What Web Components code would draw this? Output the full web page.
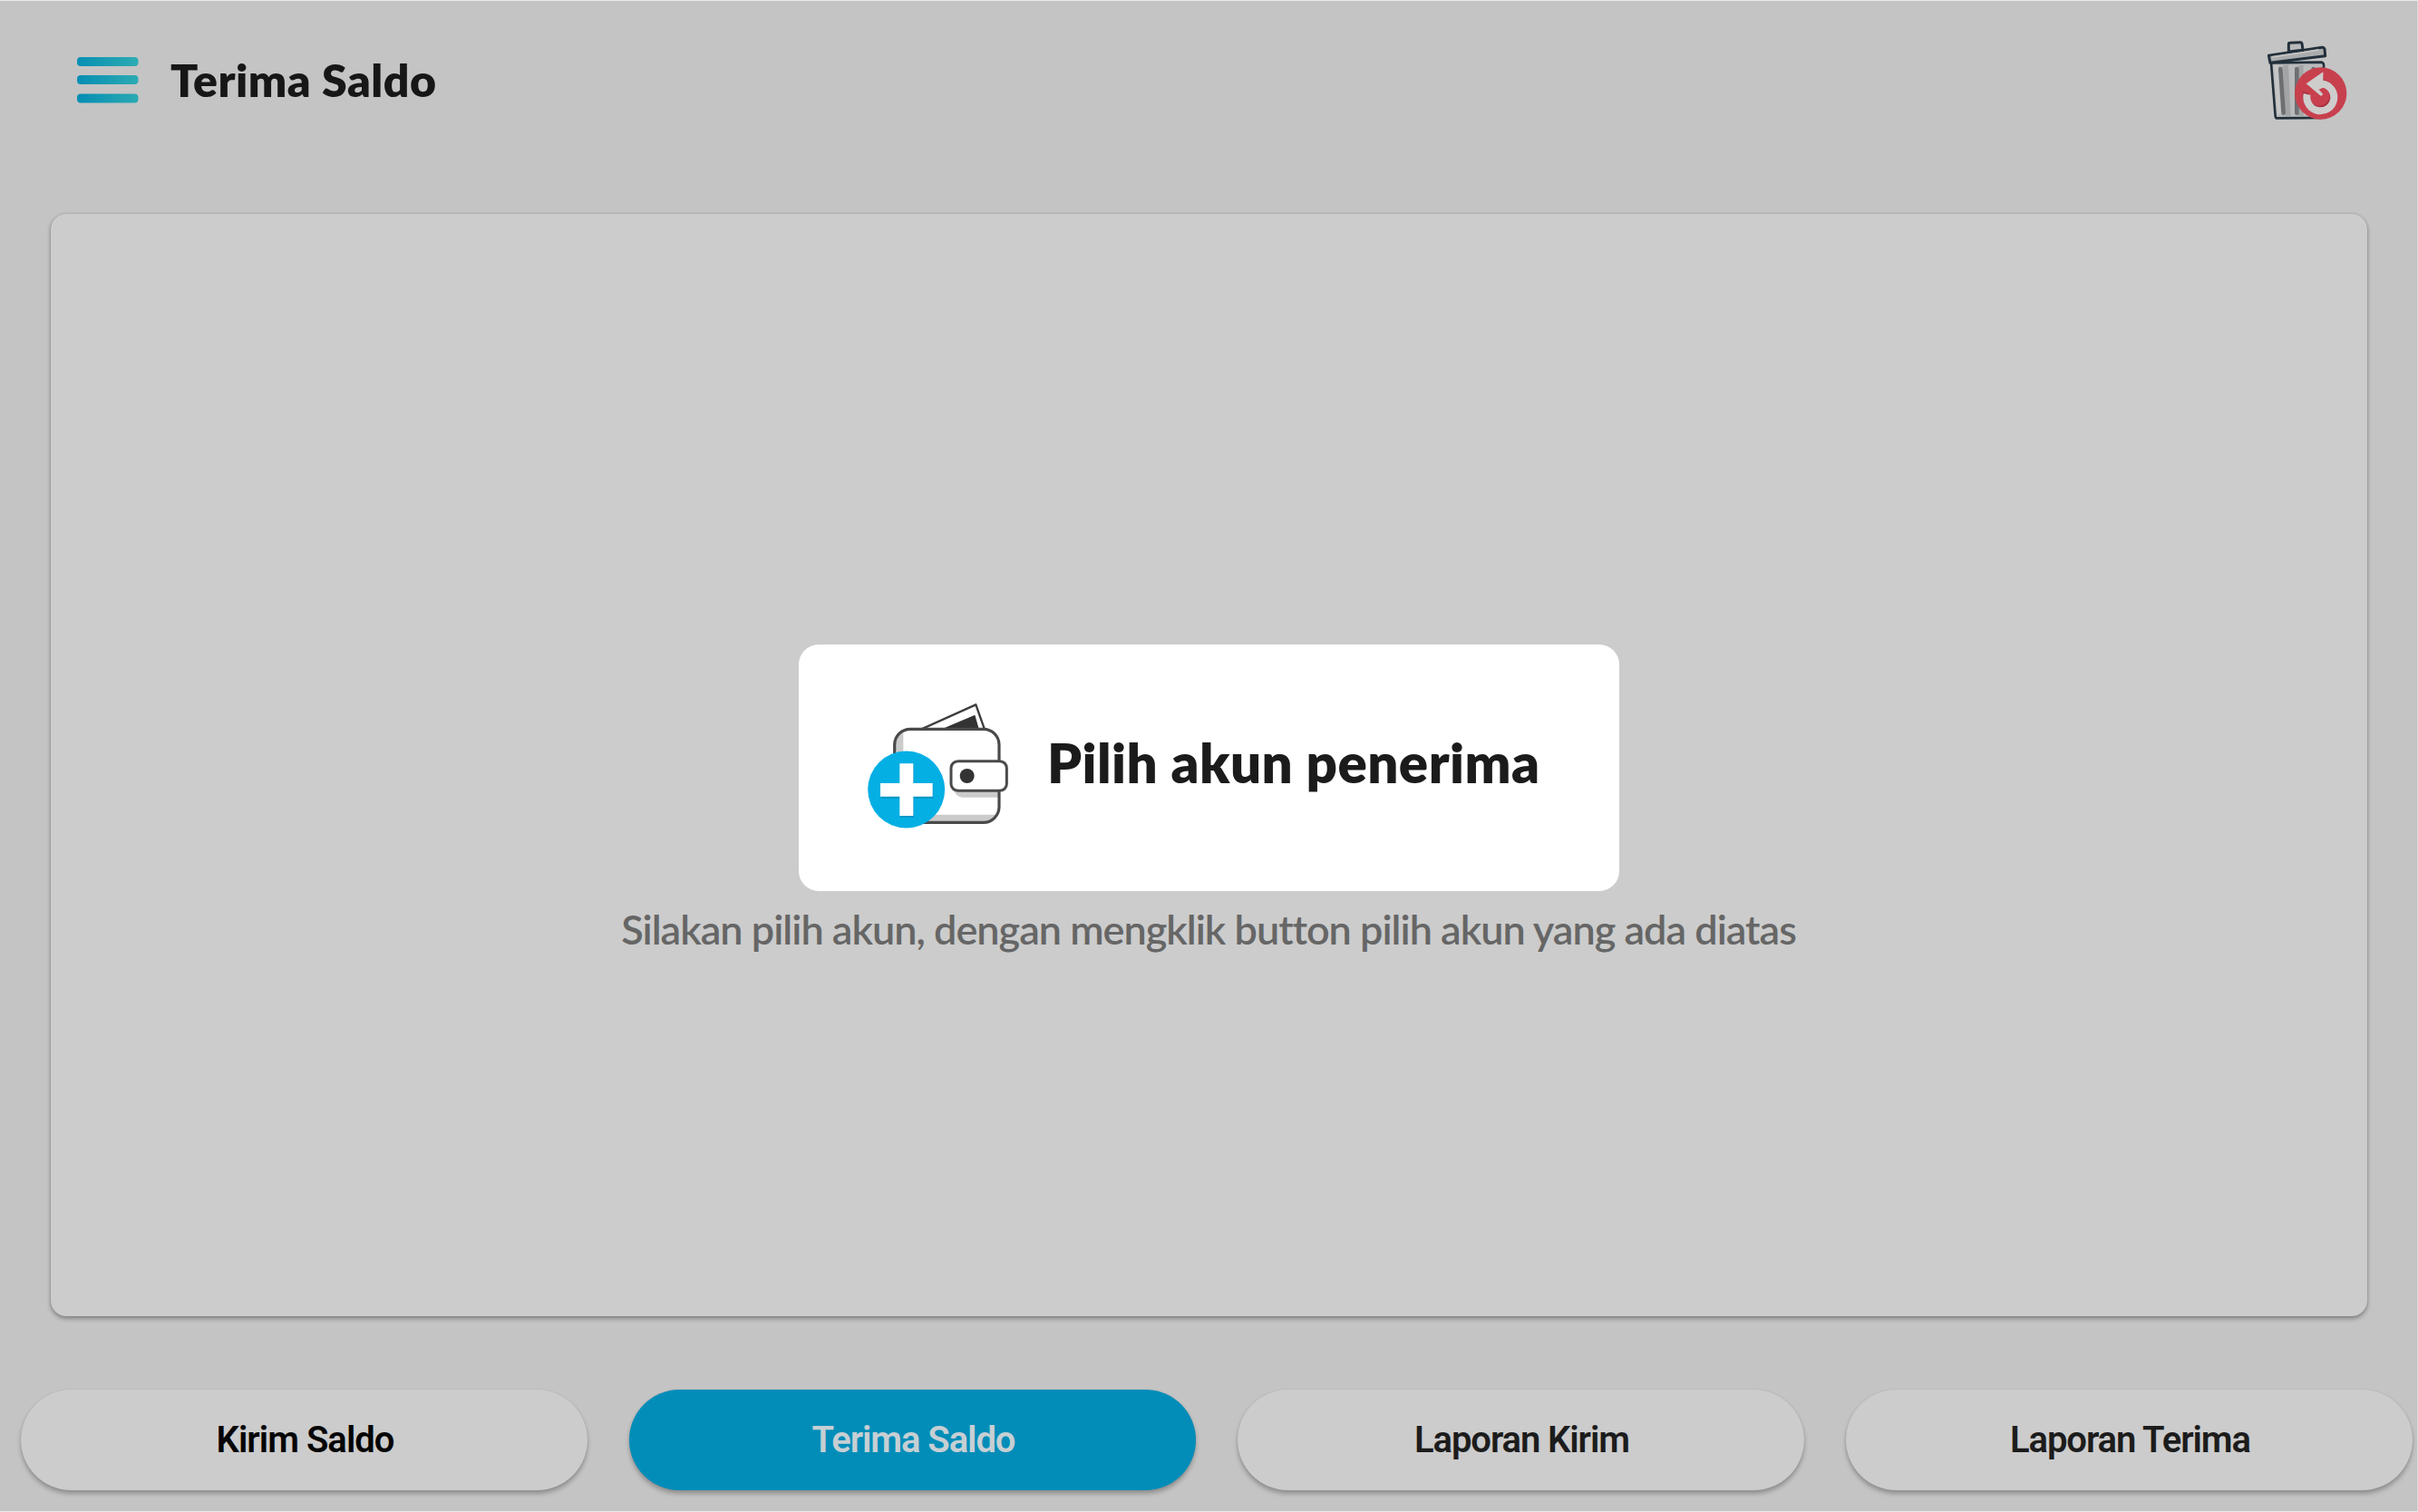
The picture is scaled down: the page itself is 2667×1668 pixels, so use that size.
<!DOCTYPE html>
<html lang="id">
<head>
<meta charset="utf-8">
<title>Terima Saldo</title>
<style>
    html, body { margin: 0; height: 100%; }
    body { background: #c4c4c4; font-family: Lato, "Open Sans", sans-serif; overflow: hidden; }
</style>
</head>
<body>
<saldo-app></saldo-app>
<script>
// single line label, letter spacing is spread so the text fills the given width
class FitLabel extends HTMLElement {

    constructor() {
        super();
        this.attachShadow({ mode: 'open' });
        this.shadowRoot.innerHTML = `
            <style>
                :host {
                    display: block;
                    white-space: nowrap;
                    font-kerning: normal;
                }
                span { display: inline-block; }
            </style>
            <span><slot></slot></span>
        `;
    }

    connectedCallback() {
        const span = this.shadowRoot.querySelector('span');
        const target = parseFloat(this.getAttribute('fit'));
        const natural = span.getBoundingClientRect().width;
        const spacing = (target - natural) / (this.textContent.length - 1);
        span.style.letterSpacing = `${spacing.toFixed(3)}px`;
        span.style.marginRight = `${(-spacing).toFixed(3)}px`;
    }
}

class MenuIcon extends HTMLElement {
    constructor() {
        super();
        this.attachShadow({ mode: 'open' });
        this.shadowRoot.innerHTML = `
            <style>
                :host { display: block; width: 68px; height: 51px; }
                svg { display: block; }
            </style>
            <svg width="68" height="51" viewBox="0 0 68 51">
                <defs>
                    <linearGradient id="g" gradientUnits="userSpaceOnUse" x1="0" y1="8" x2="68" y2="0">
                        <stop offset="0" stop-color="#078fb3"/>
                        <stop offset="1" stop-color="#2eacb2"/>
                    </linearGradient>
                </defs>
                <g fill="url(#g)">
                    <rect x="0" y="0" width="67.500" height="10" rx="4"/>
                    <rect x="0" y="20" width="67.500" height="10" rx="4"/>
                    <rect x="0" y="40.500" width="67.500" height="10" rx="4"/>
                </g>
            </svg>
        `;
    }
}

class TrashIcon extends HTMLElement {
    constructor() {
        super();
        this.attachShadow({ mode: 'open' });
        this.shadowRoot.innerHTML = `
            <style>
                :host { display: block; width: 88px; height: 87px; }
                svg { display: block; }
            </style>
            <svg width="88" height="87" viewBox="120 75 264 261">
                <path d="M132 148 L300 146 Q308 150 306 160 L296 330 L150 331 Q147 331 146 324 Z" fill="#b9babb" stroke="#22303b" stroke-width="8" stroke-linejoin="round"/>
                <path d="M148 156 L158 318" stroke="#c6c6c6" stroke-width="12"/>
                <path d="M180 156 L188 326 M230 156 V326" stroke="#a3a4a5" stroke-width="18"/>
                <path d="M163 168 L173 314 M217 168 V314 M272 168 V250" stroke="#6d7073" stroke-width="14" stroke-linecap="round"/>
                <path d="M124 124 L300 97 Q307 96 309 102 L311 125 L129 148 Z" fill="#aaabac" stroke="#22303b" stroke-width="9" stroke-linejoin="round"/>
                <path d="M133 129 L290 105" stroke="#c2c2c2" stroke-width="6"/>
                <path d="M190 111 V86 Q190 82 194 82 L229 80 Q233 80 234 84 L237 106 Z" fill="#b9babb" stroke="#22303b" stroke-width="9" stroke-linejoin="round"/>
                <circle cx="296" cy="249" r="86" fill="#c8404e"/>
                <path d="M251 252 A45 45 0 1 0 302 217.500" transform="translate(-4 -7)" fill="none" stroke="#a92f3d" stroke-width="20"/>
                <path d="M251 252 A45 45 0 1 0 302 217.500" fill="none" stroke="#cfcccc" stroke-width="24"/>
                <path d="M304 178 L248 217 L297 258 L304 252 L290 236 L304 230 Z" fill="#cfcccc"/>
            </svg>
        `;
    }
}

class WalletIcon extends HTMLElement {
    constructor() {
        super();
        this.attachShadow({ mode: 'open' });
        this.shadowRoot.innerHTML = `
            <style>
                :host { display: block; width: 155px; height: 138px; }
                svg { display: block; }
            </style>
            <svg width="155" height="138" viewBox="79 75 465 414">
                <path d="M255 161 L437 79 L466 161" fill="#fff" stroke="#3c3c3c" stroke-width="7" stroke-linejoin="round"/>
                <path d="M326 159 L434 113 L447 159 Z" fill="#333"/>
                <rect x="168" y="160" width="346" height="311" rx="52" fill="#fff"/>
                <path d="M197 163 Q168 170 169 212 V300 H197 Z" fill="#cbcbcb"/>
                <path d="M200 443 H507 Q496 470 462 470 H200 Z" fill="#cbcbcb"/>
                <path d="M366 364 H514 V386 H392 Q370 384 366 364 Z" fill="#cbcbcb"/>
                <rect x="168" y="160" width="346" height="309" rx="52" fill="none" stroke="#4a4a4a" stroke-width="9.500"/>
                <rect x="355" y="266" width="184" height="98" rx="23" fill="#fff" stroke="#4a4a4a" stroke-width="9"/>
                <circle cx="408" cy="315" r="24" fill="#333"/>
                <circle cx="207" cy="360" r="127.500" fill="#04afe4"/>
                <path d="M187 280 H232 V345 H296 V390 H232 V453 H187 V390 H123 V345 H187 Z" fill="#0797c7"/>
                <path d="M185 274 H230 V339 H294 V383 H230 V447 H185 V383 H121 V339 H185 Z" fill="#fff"/>
            </svg>
        `;
    }
}

class TopBar extends HTMLElement {
    constructor() {
        super();
        this.attachShadow({ mode: 'open' });
        this.shadowRoot.innerHTML = `
            <style>
                :host {
                    display: flex;
                    align-items: center;
                    height: 177px;
                    padding: 0 78px 2px 85px;
                    box-sizing: border-box;
                }
                .title {
                    flex: 1;
                    margin-left: 35px;
                    padding-bottom: 2px;
                    font-size: 50px;
                    line-height: 60px;
                    font-weight: 800;
                    color: #171717;
                }
            </style>
            <menu-icon></menu-icon>
            <div class="title"><slot></slot></div>
            <trash-icon></trash-icon>
        `;
    }
}

class PickButton extends HTMLElement {
    constructor() {
        super();
        this.attachShadow({ mode: 'open' });
        this.shadowRoot.innerHTML = `
            <style>
                :host {
                    display: flex;
                    align-items: center;
                    gap: 43px;
                    width: 905px;
                    height: 272px;
                    padding: 0 76px 5px;
                    box-sizing: border-box;
                    border-radius: 22px;
                    background: #fff;
                    color: #1b1b1b;
                    font-size: 60px;
                    line-height: 72px;
                    font-weight: 800;
                    cursor: pointer;
                }
                .text { padding-bottom: 8px; }
            </style>
            <wallet-icon></wallet-icon>
            <div class="text"><slot></slot></div>
        `;
    }
}

class TabButton extends HTMLElement {
    constructor() {
        super();
        this.attachShadow({ mode: 'open' });
        this.shadowRoot.innerHTML = `
            <style>
                :host {
                    display: flex;
                    flex: 1;
                    align-items: center;
                    justify-content: center;
                    height: 111px;
                    padding: 1px 0 0 3px;
                    box-sizing: border-box;
                    border-radius: 56px;
                    background: #cccccc;
                    color: #1c1c1c;
                    font: 600 40px/48px Roboto, sans-serif;
                    box-shadow: 0 4px 5px rgba(0, 0, 0, .26), 0 0 2px rgba(0, 0, 0, .1);
                    cursor: pointer;
                }
                :host([dark]) { color: #050505; }
                :host([active]) {
                    background: #028db9;
                    color: #c6cfd3;
                }
            </style>
            <slot></slot>
        `;
    }
}

class SaldoApp extends HTMLElement {
    constructor() {
        super();
        this.attachShadow({ mode: 'open' });
        this.shadowRoot.innerHTML = `
            <style>
                :host {
                    display: flex;
                    flex-direction: column;
                    width: 2667px;
                    height: 1668px;
                    box-sizing: border-box;
                    border: solid #ebebeb;
                    border-width: 1px 0;
                    background: #c4c4c4;
                    box-shadow: inset -1px 0 #dadada;
                }
                .card {
                    display: flex;
                    flex-direction: column;
                    align-items: center;
                    height: 1216px;
                    margin: 58px 56px 0;
                    padding-top: 475px;
                    box-sizing: border-box;
                    border-radius: 17px;
                    background: #cccccc;
                    box-shadow: 0 3px 5px rgba(0, 0, 0, .3), 0 0 3px rgba(0, 0, 0, .18);
                }
                .hint {
                    margin-top: 14px;
                    font-size: 45px;
                    line-height: 56px;
                    font-weight: 600;
                    color: #666666;
                }
                nav {
                    display: flex;
                    gap: 46px;
                    margin: 81px 6px 0 23px;
                }
            </style>
            <top-bar><fit-label fit="293">Terima Saldo</fit-label></top-bar>
            <div class="card">
                <pick-button><fit-label fit="543">Pilih akun penerima</fit-label></pick-button>
                <div class="hint"><fit-label fit="1295">Silakan pilih akun, dengan mengklik button pilih akun yang ada diatas</fit-label></div>
            </div>
            <nav>
                <tab-button dark><fit-label fit="197">Kirim Saldo</fit-label></tab-button>
                <tab-button active><fit-label fit="225">Terima Saldo</fit-label></tab-button>
                <tab-button><fit-label fit="238">Laporan Kirim</fit-label></tab-button>
                <tab-button><fit-label fit="266">Laporan Terima</fit-label></tab-button>
            </nav>
        `;
    }
}

customElements.define('menu-icon', MenuIcon);
customElements.define('trash-icon', TrashIcon);
customElements.define('wallet-icon', WalletIcon);
customElements.define('top-bar', TopBar);
customElements.define('pick-button', PickButton);
customElements.define('tab-button', TabButton);
customElements.define('fit-label', FitLabel);
customElements.define('saldo-app', SaldoApp);
</script>
</body>
</html>
